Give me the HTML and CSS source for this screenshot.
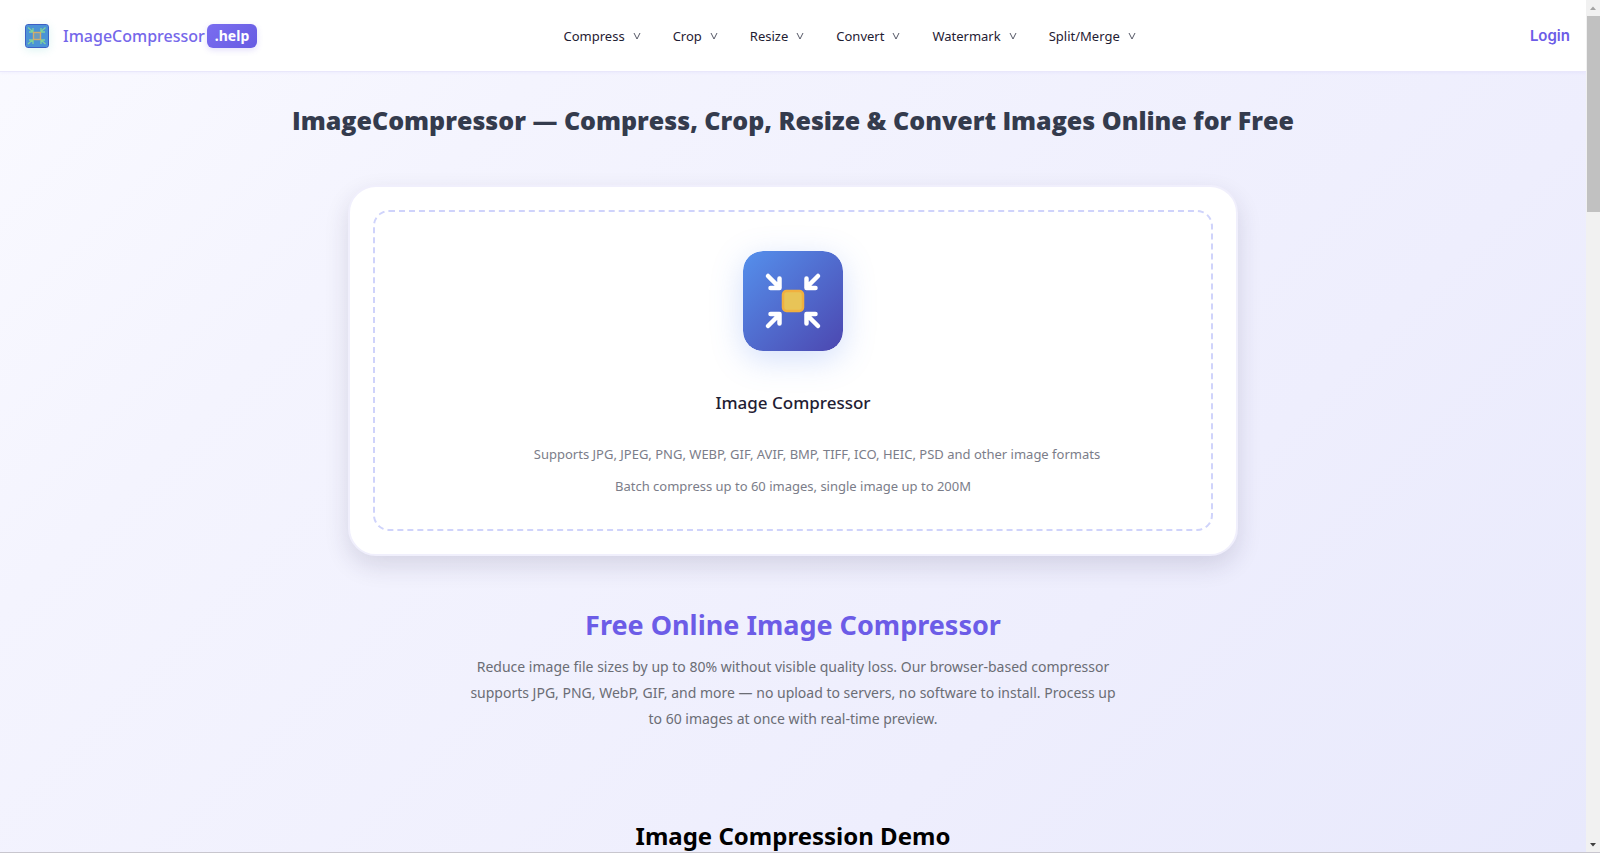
FILE: index.html
```
<!DOCTYPE html>
<html lang="en">
<head>
    <meta charset="utf-8">
    <title>ImageCompressor.help</title>
    <link rel="stylesheet" href="styles.css">
</head>
<body>
    <div class="page">
        <header class="header">
            <a href="#" class="logo">
                <svg class="logo-icon" viewBox="0 0 24 24" aria-hidden="true">
                    <rect x="0.5" y="0.5" width="23" height="23" rx="2" fill="#4b93d6" stroke="#3d5fc4"/>
                    <g fill="none" stroke="#7fd39a" stroke-width="1.3">
                        <path d="M3 3.500l4.500 4M8 4v4H4"/>
                        <path d="M20.500 3.500l-4.500 4M16 4v4h4"/>
                        <path d="M3 20l4.500-4M8 20v-4H4"/>
                        <path d="M20.500 20l-4.500-4M16 20v-4h4"/>
                    </g>
                    <rect x="8.500" y="8.500" width="7" height="7" fill="#6d9cbd" stroke="#d3ac6a" stroke-width="1.4"/>
                </svg>
                <span class="logo-text">ImageCompressor</span>
                <span class="logo-badge">.help</span>
            </a>
            <nav class="nav">
                <a href="#">Compress <svg class="chevron" viewBox="0 0 8 8"><path d="M1 1l3 6 3-6"/></svg></a>
                <a href="#">Crop <svg class="chevron" viewBox="0 0 8 8"><path d="M1 1l3 6 3-6"/></svg></a>
                <a href="#">Resize <svg class="chevron" viewBox="0 0 8 8"><path d="M1 1l3 6 3-6"/></svg></a>
                <a href="#">Convert <svg class="chevron" viewBox="0 0 8 8"><path d="M1 1l3 6 3-6"/></svg></a>
                <a href="#">Watermark <svg class="chevron" viewBox="0 0 8 8"><path d="M1 1l3 6 3-6"/></svg></a>
                <a href="#">Split/Merge <svg class="chevron" viewBox="0 0 8 8"><path d="M1 1l3 6 3-6"/></svg></a>
            </nav>
            <a href="#" class="login">Login</a>
        </header>

        <main>
            <h1>ImageCompressor — Compress, Crop, Resize &amp; Convert Images Online for Free</h1>

            <section class="upload-card">
                <div class="drop-zone">
                    <svg class="drop-icon" viewBox="0 0 100 100" aria-hidden="true">
                        <defs>
                            <linearGradient id="tile" x1="0" y1="0" x2="1" y2="1">
                                <stop offset="0" stop-color="#5590ec"/>
                                <stop offset="1" stop-color="#4c47b0"/>
                            </linearGradient>
                        </defs>
                        <rect width="100" height="100" rx="20" fill="url(#tile)"/>
                        <g fill="none" stroke="#fff" stroke-width="4.500" stroke-linecap="round" stroke-linejoin="round">
                            <path d="M25 25l11.500 11.500M36.500 27.500v9.500H27.500"/>
                            <path d="M75 25L63.500 36.500M63.500 27.500v9.500h9"/>
                            <path d="M25 75l11.500-11.500M36.500 72.500v-9.500H27.500"/>
                            <path d="M75 75L63.500 63.500M63.500 72.500v-9.500h9"/>
                        </g>
                        <rect x="40" y="40" width="20" height="20" rx="3.500" fill="#e8c457" stroke="#f1b03f" stroke-width="2.500"/>
                    </svg>
                    <h2 class="drop-title">Image Compressor</h2>
                    <p class="formats">Supports JPG, JPEG, PNG, WEBP, GIF, AVIF, BMP, TIFF, ICO, HEIC, PSD and other image formats</p>
                    <p>Batch compress up to 60 images, single image up to 200M</p>
                </div>
            </section>

            <section class="intro">
                <h2>Free Online Image Compressor</h2>
                <p>Reduce image file sizes by up to 80% without visible quality loss. Our browser-based compressor supports JPG, PNG, WebP, GIF, and more — no upload to servers, no software to install. Process up to 60 images at once with real-time preview.</p>
            </section>

            <section class="demo">
                <h2>Image Compression Demo</h2>
            </section>
        </main>
    </div>

    <div class="scrollbar" aria-hidden="true">
        <svg viewBox="0 0 14 16"><path d="M4 10l3-3.500 3 3.500z" fill="#a3a3a3"/></svg>
        <div class="scrollbar-thumb"></div>
        <svg viewBox="0 0 14 16"><path d="M4 7l3 3.500 3-3.500z" fill="#404040"/></svg>
    </div>
</body>
</html>
```
FILE: styles.css
```
* {
    box-sizing: border-box;
}

body {
    display: flex;
    height: 100vh;
    margin: 0;
    overflow: hidden;
    border-bottom: 1px solid #c8c6ce;
    font-family: "Noto Sans", "Open Sans", sans-serif;
    color: #1f2033;
}

h1, h2, p {
    margin: 0;
}

a {
    color: inherit;
    text-decoration: none;
}

.page {
    flex: 1;
    min-width: 0;
    overflow: hidden;
    background: linear-gradient(135deg, #fafaff 0%, #f4f4fe 25%, #eeeefd 70%, #e8e9fc 100%);
}

.header {
    display: flex;
    align-items: center;
    height: 72px;
    padding: 0 16px 0 25px;
    background: #fff;
    border-bottom: 1px solid #e9e7fb;
    box-shadow: 0 1px 3px rgba(108, 92, 231, 0.06);
}

.logo {
    display: flex;
    align-items: center;
}

.logo-icon {
    width: 24px;
    height: 24px;
    margin-right: 14px;
    border-radius: 3px;
    box-shadow: 0 2px 8px rgba(80, 200, 190, 0.2);
}

.logo-text {
    margin-right: 2px;
    font-size: 16px;
    font-weight: 500;
    color: #7567ea;
}

.logo-badge {
    padding: 0 8px;
    border-radius: 6px;
    background: linear-gradient(135deg, #7a6df0, #675ce2);
    box-shadow: 0 2px 6px rgba(108, 92, 231, 0.2);
    font-size: 14px;
    font-weight: 700;
    line-height: 24px;
    color: #fff;
}

.nav {
    display: flex;
    gap: 32px;
    margin: 0 auto;
    font-size: 13px;
}

.nav a {
    display: flex;
    align-items: center;
    gap: 8px;
}

.chevron {
    width: 8px;
    height: 8px;
    fill: none;
    stroke: #555766;
    stroke-width: 1;
}

.login {
    min-width: 128px;
    font-family: Inter, sans-serif;
    font-size: 15px;
    font-weight: 600;
    text-align: right;
    color: #6c5ce7;
}

main {
    text-align: center;
}

h1 {
    padding: 30px 0 47px;
    font-family: "Open Sans", "Noto Sans", sans-serif;
    font-size: 25px;
    font-weight: 800;
    line-height: 36px;
    color: #343b4d;
}

.upload-card {
    max-width: 890px;
    margin: 0 auto;
    padding: 23px;
    border: 2px solid #f0effc;
    border-radius: 28px;
    background: #fff;
    box-shadow: 0 10px 24px rgba(40, 36, 80, 0.14);
}

.drop-zone {
    padding: 39px 0 27px;
    border: 2px dashed #cfd3fb;
    border-radius: 16px;
    font-size: 13px;
    line-height: 32px;
    color: #7b7d89;
}

.drop-icon {
    display: block;
    width: 100px;
    height: 100px;
    margin: 0 auto 36px;
    border-radius: 20px;
    box-shadow: 0 8px 32px rgba(85, 130, 240, 0.26);
}

.drop-title {
    margin-bottom: 19px;
    font-size: 17px;
    font-weight: 500;
    color: #1f2033;
}

.formats {
    padding-left: 48px;
}

.intro {
    max-width: 656px;
    margin: 0 auto;
    padding-top: 47px;
}

.intro h2 {
    margin-bottom: 7px;
    font-size: 27px;
    line-height: 44px;
    color: #6c5ce7;
}

.intro p {
    font-size: 14px;
    line-height: 26px;
    color: #6b6d75;
}

.demo {
    padding-top: 86px;
}

.demo h2 {
    font-size: 24px;
    line-height: 36px;
    color: #000;
}

.scrollbar {
    display: flex;
    flex-direction: column;
    width: 14px;
    background: #f1f1f1;
}

.scrollbar svg {
    width: 14px;
    height: 16px;
}

.scrollbar-thumb {
    height: 23%;
    margin: 0 0 auto 1px;
    background: #c1c1c1;
}
```
